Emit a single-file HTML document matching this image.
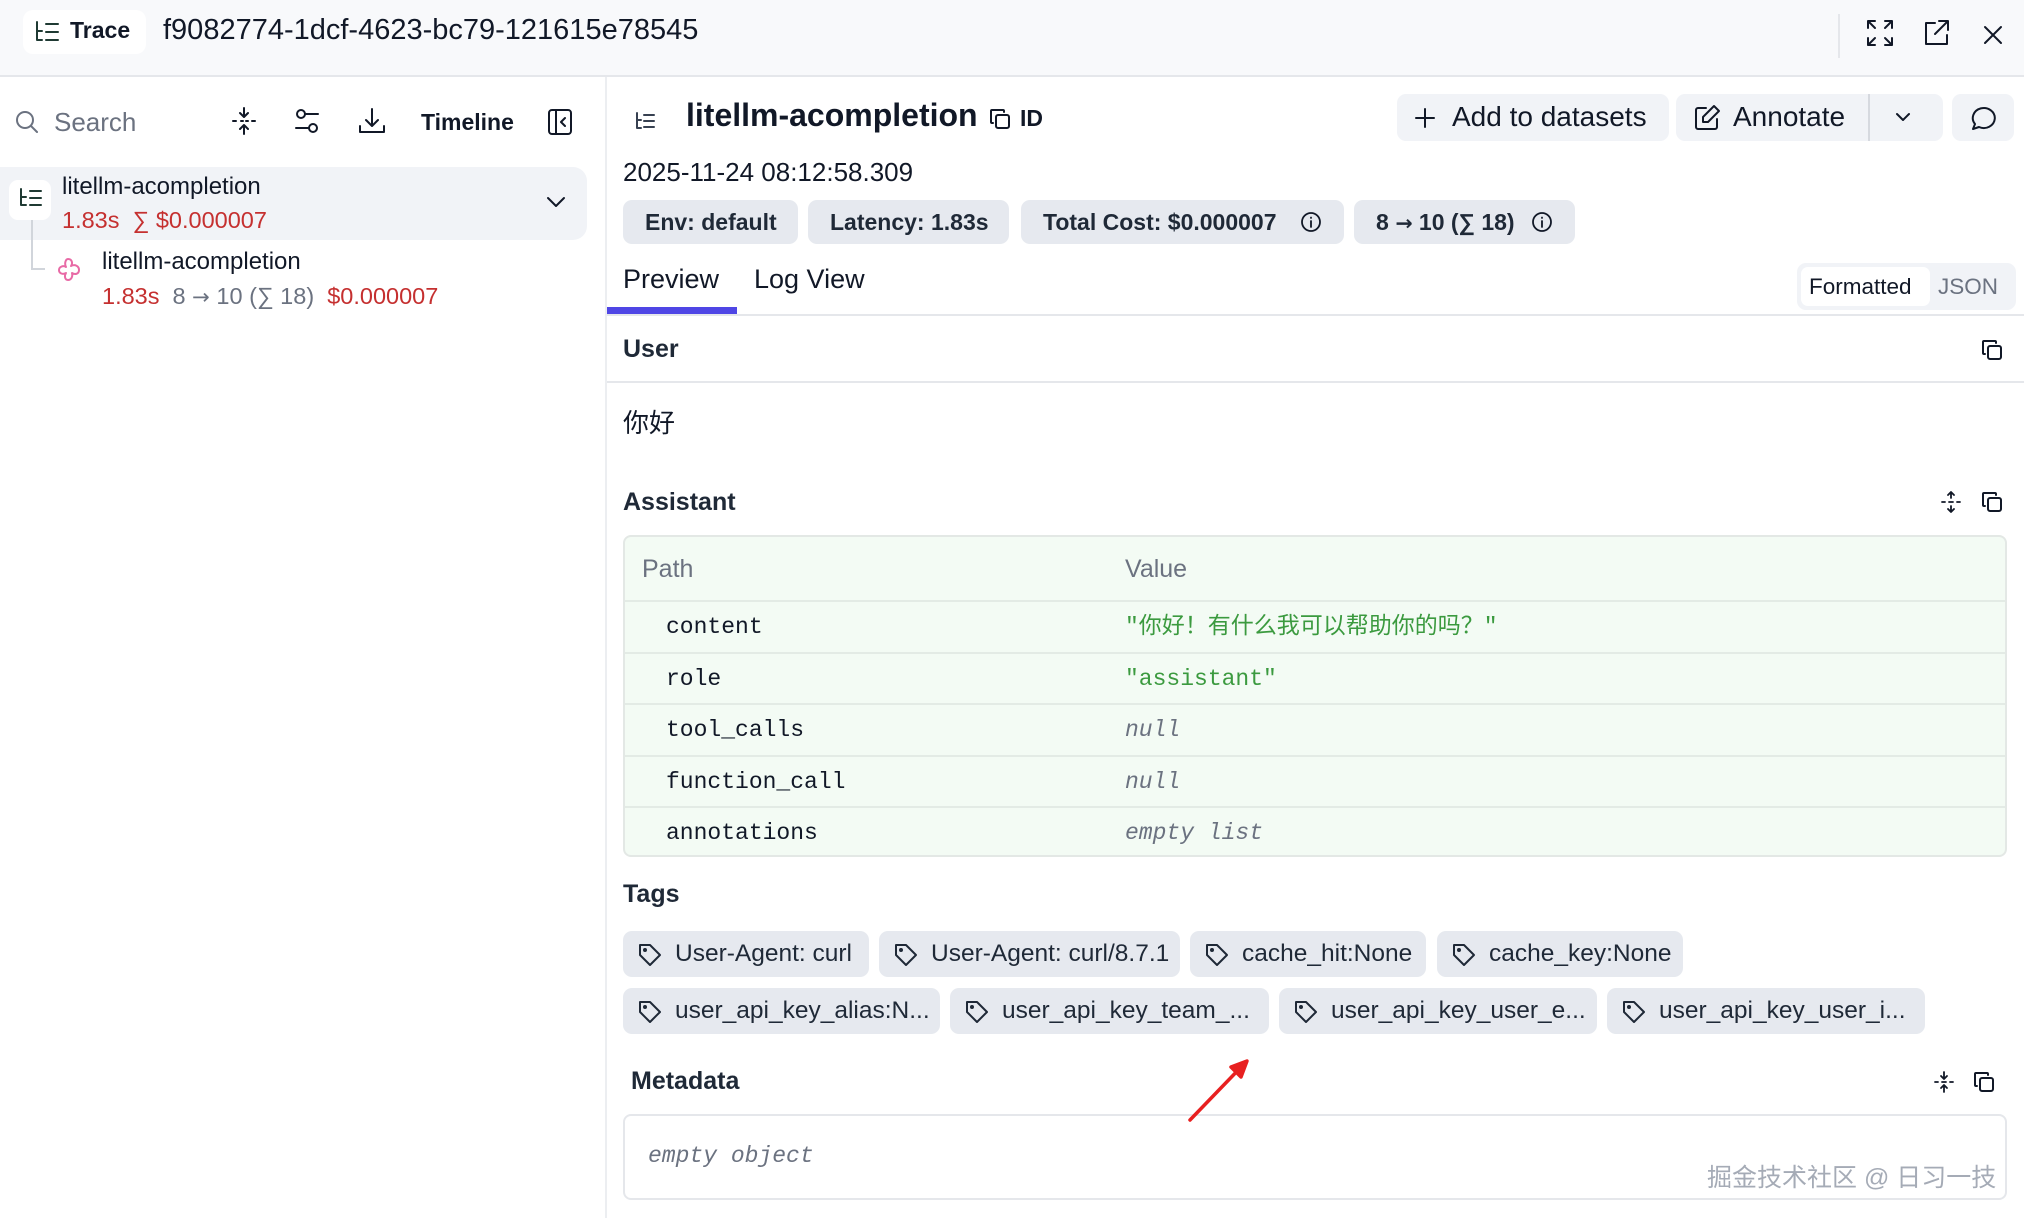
<!DOCTYPE html>
<html><head><meta charset="utf-8"><style>
*{box-sizing:border-box;margin:0;padding:0}
body{width:2024px;height:1218px;overflow:hidden;background:#fff;font-family:"Liberation Sans","Noto Sans CJK SC",sans-serif;color:#111827;position:relative}
.a{position:absolute;white-space:nowrap}
svg{position:absolute;fill:none;stroke:currentColor;stroke-width:2;stroke-linecap:round;stroke-linejoin:round}
.mono{font-family:"Liberation Mono","Noto Sans CJK SC",monospace}
.arr{font-family:"DejaVu Sans",sans-serif;font-size:0.9em}
.badge{position:absolute;top:200px;height:44px;background:#e6e9ef;border-radius:9px;font-size:23px;font-weight:700;color:#1f2937;line-height:44px;padding-left:22px}
.btn{position:absolute;top:94px;height:47px;background:#f1f3f7;border-radius:9px}
.row{position:absolute;left:0;right:0;border-top:2px solid #e3ebe5;height:52px}
.row .k{position:absolute;left:41px;top:0;line-height:50px;font-size:23px}
.row .v{position:absolute;left:500px;top:0;line-height:50px;font-size:23px}
.tag{position:absolute;height:46px;background:#e6e9ef;border-radius:9px;font-size:24.5px;color:#1f2937;line-height:46px;padding-left:52px}
.tag svg{left:14px;top:11px}
.h{font-size:25px;font-weight:700;color:#1f2937}
</style></head><body>
<!-- header -->
<div class="a" style="left:0;top:0;width:2024px;height:77px;background:#f8f9fb;border-bottom:2px solid #e5e7eb"></div>
<div class="a" style="left:23px;top:10px;width:123px;height:44px;background:#fff;border-radius:10px"></div>
<svg style="left:34px;top:20px;color:#1f3a33" width="26" height="24" viewBox="0 0 26 24"><path d="M3 2v18h5M3 11h5M12 4h12M12 12h12M12 20h12"/></svg>
<div class="a" style="left:70px;top:17px;font-size:23px;font-weight:700">Trace</div>
<div class="a" style="left:163px;top:14px;font-size:29px">f9082774-1dcf-4623-bc79-121615e78545</div>
<div class="a" style="left:1838px;top:14px;width:2px;height:44px;background:#e5e7eb"></div>
<svg style="left:1865px;top:18px" width="30" height="30" viewBox="0 0 30 30"><path d="M3 10V3h7M3 3l7 7M27 10V3h-7M27 3l-7 7M3 20v7h7M3 27l7-7M27 20v7h-7M27 27l-7-7"/></svg>
<svg style="left:1921px;top:18px" width="30" height="30" viewBox="0 0 30 30"><path d="M14 5H5v21h21v-9M18 3h9v9M27 3L14 16"/></svg>
<svg style="left:1982px;top:24px" width="22" height="22" viewBox="0 0 22 22"><path d="M3 3l16 16M19 3L3 19"/></svg>
<!-- left panel -->
<div class="a" style="left:605px;top:77px;width:2px;height:1141px;background:#eceef1"></div>
<svg style="left:14px;top:109px;color:#6b7280" width="26" height="26" viewBox="0 0 26 26"><circle cx="11" cy="11" r="8"/><path d="M17 17l6 6"/></svg>
<div class="a" style="left:54px;top:107px;font-size:26px;color:#6b7280">Search</div>
<svg style="left:230px;top:106px" width="28" height="30" viewBox="0 0 28 30"><path d="M14 2v9M10 7l4 4 4-4M14 28v-9M10 23l4-4 4 4M3 15h3M11 15h2M16 15h2M22 15h3"/></svg>
<svg style="left:293px;top:107px" width="28" height="28" viewBox="0 0 28 28"><circle cx="8" cy="7" r="4"/><path d="M12 7h13M3 21h13"/><circle cx="20" cy="21" r="4"/></svg>
<svg style="left:357px;top:106px" width="30" height="30" viewBox="0 0 30 30"><path d="M15 3v17M9 14l6 6 6-6M3 20v6h24v-6"/></svg>
<div class="a" style="left:421px;top:109px;font-size:23px;font-weight:700">Timeline</div>
<svg style="left:547px;top:108px" width="26" height="28" viewBox="0 0 26 28"><rect x="2" y="2" width="22" height="24" rx="3"/><path d="M9 2v24M18 10l-4 4 4 4"/></svg>
<div class="a" style="left:0;top:167px;width:587px;height:73px;background:#f1f3f7;border-radius:0 14px 14px 0"></div>
<div class="a" style="left:9px;top:180px;width:42px;height:40px;background:#fff;border-radius:9px"></div>
<svg style="left:18px;top:186px;color:#1f3a33" width="26" height="24" viewBox="0 0 26 24"><path d="M3 3v16h5M3 11h5M12 5h11M12 12h11M12 19h11"/></svg>
<div class="a" style="left:31px;top:220px;width:2px;height:50px;background:#d1d5db"></div>
<div class="a" style="left:31px;top:268px;width:14px;height:2px;background:#d1d5db"></div>
<div class="a" style="left:62px;top:173px;font-size:24px">litellm-acompletion</div>
<div class="a" style="left:62px;top:207px;font-size:23.5px;color:#c53030">1.83s &nbsp;∑ $0.000007</div>
<svg style="left:545px;top:194px" width="22" height="16" viewBox="0 0 22 16"><path d="M3 4l8 8 8-8"/></svg>
<svg style="left:58px;top:256px;color:#e86aa6" width="24" height="26" viewBox="0 0 24 26"><path d="M10 3c4 0 5 4 3 7 4-2 8 0 8 4s-4 5-7 3c1 4-1 7-4 7s-4-4-2-7c-4 2-7 0-7-3s4-5 7-3c-2-4 0-8 2-8z"/></svg>
<div class="a" style="left:102px;top:248px;font-size:24px">litellm-acompletion</div>
<div class="a" style="left:102px;top:283px;font-size:23.5px;color:#c53030">1.83s &nbsp;<span style="color:#6b7280">8 <span class="arr">→</span> 10 (∑ 18)</span>&nbsp; $0.000007</div>
<!-- right header -->
<svg style="left:634px;top:110px;color:#374151" width="24" height="22" viewBox="0 0 24 22"><path d="M3 3v15h4M3 10h4M10 5h10M10 11h10M10 17h10"/></svg>
<div class="a" style="left:686px;top:97px;font-size:32px;font-weight:700;color:#111827">litellm-acompletion</div>
<svg style="left:988px;top:107px" width="24" height="24" viewBox="0 0 24 24"><rect x="8" y="8" width="13" height="13" rx="2"/><path d="M5 16H4a1 1 0 0 1-1-1V4a1 1 0 0 1 1-1h11a1 1 0 0 1 1 1v1"/></svg>
<div class="a" style="left:1020px;top:105px;font-size:23px;font-weight:700">ID</div>
<div class="btn" style="left:1397px;width:272px"></div>
<svg style="left:1413px;top:106px" width="24" height="24" viewBox="0 0 24 24"><path d="M12 3v18M3 12h18"/></svg>
<div class="a" style="left:1452px;top:101px;font-size:28px">Add to datasets</div>
<div class="btn" style="left:1676px;width:267px"></div>
<div class="a" style="left:1868px;top:94px;width:2px;height:47px;background:#d6d9df"></div>
<svg style="left:1693px;top:104px" width="28" height="28" viewBox="0 0 28 28"><path d="M13 4H5a2 2 0 0 0-2 2v17a2 2 0 0 0 2 2h17a2 2 0 0 0 2-2v-8"/><path d="M21 2l5 5-11 11H10v-5z"/></svg>
<div class="a" style="left:1733px;top:101px;font-size:28px">Annotate</div>
<svg style="left:1895px;top:111px" width="16" height="12" viewBox="0 0 16 12"><path d="M2 3l6 6 6-6"/></svg>
<div class="btn" style="left:1952px;width:62px"></div>
<svg style="left:1968px;top:105px" width="28" height="28" viewBox="0 0 28 28"><path d="M5 24l2-5a11 10 0 1 1 4 3z"/></svg>
<div class="a" style="left:623px;top:157px;font-size:26px">2025-11-24 08:12:58.309</div>
<div class="badge" style="left:623px;width:175px">Env: default</div>
<div class="badge" style="left:808px;width:201px">Latency: 1.83s</div>
<div class="badge" style="left:1021px;width:323px">Total Cost: $0.000007</div>
<svg style="left:1300px;top:211px;stroke-width:1.8" width="22" height="22" viewBox="0 0 22 22"><circle cx="11" cy="11" r="9"/><path d="M11 10v6M11 6.5v.5"/></svg>
<div class="badge" style="left:1354px;width:221px">8 <span class="arr">→</span> 10 (∑ 18)</div>
<svg style="left:1531px;top:211px;stroke-width:1.8" width="22" height="22" viewBox="0 0 22 22"><circle cx="11" cy="11" r="9"/><path d="M11 10v6M11 6.5v.5"/></svg>
<!-- tabs -->
<div class="a" style="left:623px;top:264px;font-size:27px">Preview</div>
<div class="a" style="left:754px;top:264px;font-size:27px">Log View</div>
<div class="a" style="left:607px;top:314px;width:1417px;height:2px;background:#e5e7eb"></div>
<div class="a" style="left:607px;top:307px;width:130px;height:7px;background:#4f46e5"></div>
<div class="a" style="left:1797px;top:263px;width:219px;height:47px;background:#f1f3f7;border-radius:9px"></div>
<div class="a" style="left:1801px;top:267px;width:129px;height:39px;background:#fff;border-radius:7px"></div>
<div class="a" style="left:1809px;top:274px;font-size:22.5px">Formatted</div>
<div class="a" style="left:1938px;top:274px;font-size:22.5px;color:#6b7280">JSON</div>
<!-- user -->
<div class="a h" style="left:623px;top:335px">User</div>
<svg style="left:1980px;top:338px" width="24" height="24" viewBox="0 0 24 24"><rect x="8" y="8" width="13" height="13" rx="2"/><path d="M5 16H4a1 1 0 0 1-1-1V4a1 1 0 0 1 1-1h11a1 1 0 0 1 1 1v1"/></svg>
<div class="a" style="left:607px;top:381px;width:1417px;height:2px;background:#e5e7eb"></div>
<div class="a" style="left:623px;top:403px;font-size:26px">你好</div>
<!-- assistant -->
<div class="a h" style="left:623px;top:488px">Assistant</div>
<svg style="left:1940px;top:490px;stroke-width:1.8" width="22" height="24" viewBox="0 0 22 24"><path d="M11 2v6M8 5l3-3 3 3M11 22v-6M8 19l3 3 3-3M2 12h3M9 12h4M17 12h3"/></svg>
<svg style="left:1980px;top:490px" width="24" height="24" viewBox="0 0 24 24"><rect x="8" y="8" width="13" height="13" rx="2"/><path d="M5 16H4a1 1 0 0 1-1-1V4a1 1 0 0 1 1-1h11a1 1 0 0 1 1 1v1"/></svg>
<div class="a" style="left:623px;top:535px;width:1384px;height:322px;background:#f3fbf4;border:2px solid #e3e8e5;border-radius:8px;overflow:hidden">
 <div class="a" style="left:17px;top:18px;font-size:25px;color:#6b7280">Path</div>
 <div class="a" style="left:500px;top:18px;font-size:25px;color:#6b7280">Value</div>
 <div class="row" style="top:63px"><span class="k mono">content</span><span class="v mono" style="color:#3b9a3f">"你好！有什么我可以帮助你的吗？"</span></div>
 <div class="row" style="top:115px"><span class="k mono">role</span><span class="v mono" style="color:#3b9a3f">"assistant"</span></div>
 <div class="row" style="top:166px"><span class="k mono">tool_calls</span><span class="v mono" style="color:#6b7280;font-style:italic">null</span></div>
 <div class="row" style="top:218px"><span class="k mono">function_call</span><span class="v mono" style="color:#6b7280;font-style:italic">null</span></div>
 <div class="row" style="top:269px"><span class="k mono">annotations</span><span class="v mono" style="color:#6b7280;font-style:italic">empty list</span></div>
</div>
<!-- tags -->
<div class="a h" style="left:623px;top:880px">Tags</div>
<div class="tag" style="left:623px;top:931px;width:246px"><svg width="26" height="26" viewBox="0 0 26 26"><path d="M3 3h10l10 10-10 10L3 13z"/><circle cx="8" cy="8" r="1"/></svg>User-Agent: curl</div>
<div class="tag" style="left:879px;top:931px;width:301px"><svg width="26" height="26" viewBox="0 0 26 26"><path d="M3 3h10l10 10-10 10L3 13z"/><circle cx="8" cy="8" r="1"/></svg>User-Agent: curl/8.7.1</div>
<div class="tag" style="left:1190px;top:931px;width:236px"><svg width="26" height="26" viewBox="0 0 26 26"><path d="M3 3h10l10 10-10 10L3 13z"/><circle cx="8" cy="8" r="1"/></svg>cache_hit:None</div>
<div class="tag" style="left:1437px;top:931px;width:246px"><svg width="26" height="26" viewBox="0 0 26 26"><path d="M3 3h10l10 10-10 10L3 13z"/><circle cx="8" cy="8" r="1"/></svg>cache_key:None</div>
<div class="tag" style="left:623px;top:988px;width:317px"><svg width="26" height="26" viewBox="0 0 26 26"><path d="M3 3h10l10 10-10 10L3 13z"/><circle cx="8" cy="8" r="1"/></svg>user_api_key_alias:N...</div>
<div class="tag" style="left:950px;top:988px;width:319px"><svg width="26" height="26" viewBox="0 0 26 26"><path d="M3 3h10l10 10-10 10L3 13z"/><circle cx="8" cy="8" r="1"/></svg>user_api_key_team_...</div>
<div class="tag" style="left:1279px;top:988px;width:318px"><svg width="26" height="26" viewBox="0 0 26 26"><path d="M3 3h10l10 10-10 10L3 13z"/><circle cx="8" cy="8" r="1"/></svg>user_api_key_user_e...</div>
<div class="tag" style="left:1607px;top:988px;width:318px"><svg width="26" height="26" viewBox="0 0 26 26"><path d="M3 3h10l10 10-10 10L3 13z"/><circle cx="8" cy="8" r="1"/></svg>user_api_key_user_i...</div>
<!-- metadata -->
<div class="a h" style="left:631px;top:1067px">Metadata</div>
<svg style="left:1933px;top:1070px;stroke-width:1.8" width="22" height="24" viewBox="0 0 22 24"><path d="M11 2v7M8 6l3 3 3-3M11 22v-7M8 18l3-3 3 3M2 12h3M9 12h4M17 12h3"/></svg>
<svg style="left:1972px;top:1070px" width="24" height="24" viewBox="0 0 24 24"><rect x="8" y="8" width="13" height="13" rx="2"/><path d="M5 16H4a1 1 0 0 1-1-1V4a1 1 0 0 1 1-1h11a1 1 0 0 1 1 1v1"/></svg>
<div class="a" style="left:623px;top:1114px;width:1384px;height:86px;border:2px solid #e5e7eb;border-radius:8px"></div>
<div class="a mono" style="left:648px;top:1143px;font-size:23px;font-style:italic;color:#6b7280">empty object</div>
<div class="a" style="left:1707px;top:1158px;font-size:25px;color:#9ca3af;opacity:.9">掘金技术社区 @ 日习一技</div>
<svg style="left:1185px;top:1055px;color:#e82020;stroke-width:3.5" width="70" height="70" viewBox="0 0 70 70"><path d="M5 65L60 8"/><path d="M46 12l16-6-6 16z" fill="#e82020"/></svg>
</body></html>
